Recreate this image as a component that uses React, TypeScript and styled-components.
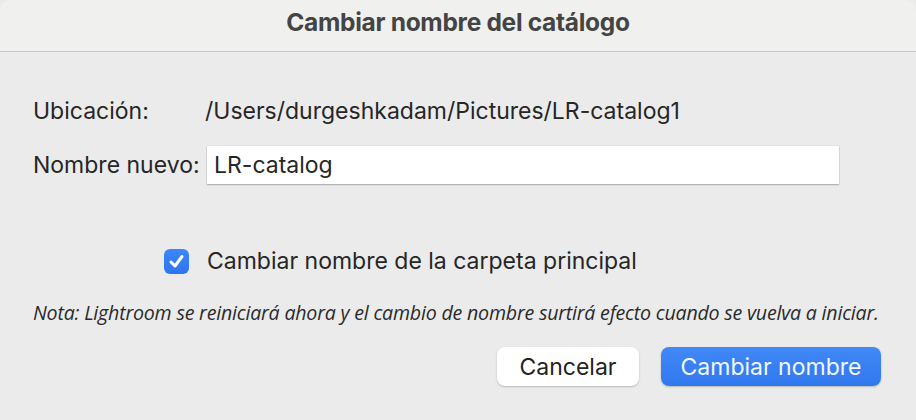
import React from "react";
import styled, { createGlobalStyle } from "styled-components";

const GlobalStyle = createGlobalStyle`
  html, body {
    margin: 0;
    padding: 0;
    background: #ebebeb;
  }
  body {
    font-family: Inter, Roboto, "Liberation Sans", sans-serif;
    color: #232323;
  }
`;

const Dialog = styled.div`
  width: 916px;
  height: 420px;
  background: #ebebeb;
  overflow: hidden;
  display: flex;
  flex-direction: column;
`;

const TitleBar = styled.div`
  height: 52px;
  background: #f0f0ef;
  border-bottom: 1px solid #c9c9c9;
  border-radius: 10px 10px 0 0;
  display: flex;
  align-items: center;
  justify-content: center;
  box-sizing: border-box;
  padding-bottom: 7px;
`;

const Title = styled.h1`
  margin: 0;
  font-size: 24.5px;
  font-weight: 700;
  color: #444444;
  letter-spacing: -0.3px;
`;

const Body = styled.div`
  flex: 1;
  display: flex;
  flex-direction: column;
  padding: 0 35px 0 33px;
`;

const Row = styled.div<{ top: number }>`
  display: grid;
  grid-template-columns: 172px 1fr;
  align-items: center;
  margin-top: ${(p) => p.top}px;
`;

const Label = styled.span`
  font-size: 23px;
  color: #262626;
`;

const Value = styled.span`
  font-size: 23px;
  color: #262626;
`;

const TextField = styled.div`
  width: 632px;
  height: 38px;
  margin-left: 2px;
  background: #ffffff;
  box-shadow: 0 1px 1.5px rgba(0, 0, 0, 0.28), 0 0 0 0.5px rgba(0, 0, 0, 0.06);
  display: flex;
  align-items: center;
  padding-left: 7px;
  box-sizing: border-box;
  font-size: 23px;
  color: #262626;
`;

const CheckRow = styled.label`
  display: flex;
  align-items: center;
  gap: 18px;
  margin-top: 63px;
  margin-left: 131px;
  font-size: 23px;
  color: #262626;
`;

const CheckBox = styled.span`
  width: 25px;
  height: 25px;
  border-radius: 6px;
  background: linear-gradient(#3c86f7, #2f74ef);
  display: flex;
  align-items: center;
  justify-content: center;
`;

const Note = styled.p`
  margin: 24px 0 0 0;
  font-family: "Open Sans", "Liberation Sans", sans-serif;
  font-style: italic;
  font-size: 19.6px;
  color: #2a2a2a;
  white-space: nowrap;
  letter-spacing: -0.2px;
`;

const Buttons = styled.div`
  display: flex;
  justify-content: flex-end;
  gap: 22px;
  margin-top: 21px;
`;

const Button = styled.button<{ primary?: boolean }>`
  height: 39px;
  width: ${(p) => (p.primary ? 220 : 142)}px;
  border: none;
  border-radius: 8px;
  font-family: Inter, Roboto, "Liberation Sans", sans-serif;
  font-size: 23px;
  color: ${(p) => (p.primary ? "#f4f8ff" : "#222222")};
  background: ${(p) =>
    p.primary ? "linear-gradient(#4189f7, #3078ee)" : "#ffffff"};
  box-shadow: 0 1px 2px rgba(0, 0, 0, 0.22);
  padding: 0;
`;

export default function App() {
  return (
    <>
      <GlobalStyle />
      <Dialog>
        <TitleBar>
          <Title>Cambiar nombre del catálogo</Title>
        </TitleBar>
        <Body>
          <Row top={45}>
            <Label>Ubicación:</Label>
            <Value>/Users/durgeshkadam/Pictures/LR-catalog1</Value>
          </Row>
          <Row top={21}>
            <Label>Nombre nuevo:</Label>
            <TextField>LR-catalog</TextField>
          </Row>
          <CheckRow>
            <CheckBox>
              <svg width="19" height="19" viewBox="0 0 19 19">
                <path
                  d="M4 10 L8 14 L15 4.5"
                  fill="none"
                  stroke="#fff"
                  strokeWidth="3"
                  strokeLinecap="round"
                  strokeLinejoin="round"
                />
              </svg>
            </CheckBox>
            Cambiar nombre de la carpeta principal
          </CheckRow>
          <Note>
            Nota: Lightroom se reiniciará ahora y el cambio de nombre surtirá
            efecto cuando se vuelva a iniciar.
          </Note>
          <Buttons>
            <Button>Cancelar</Button>
            <Button primary>Cambiar nombre</Button>
          </Buttons>
        </Body>
      </Dialog>
    </>
  );
}
